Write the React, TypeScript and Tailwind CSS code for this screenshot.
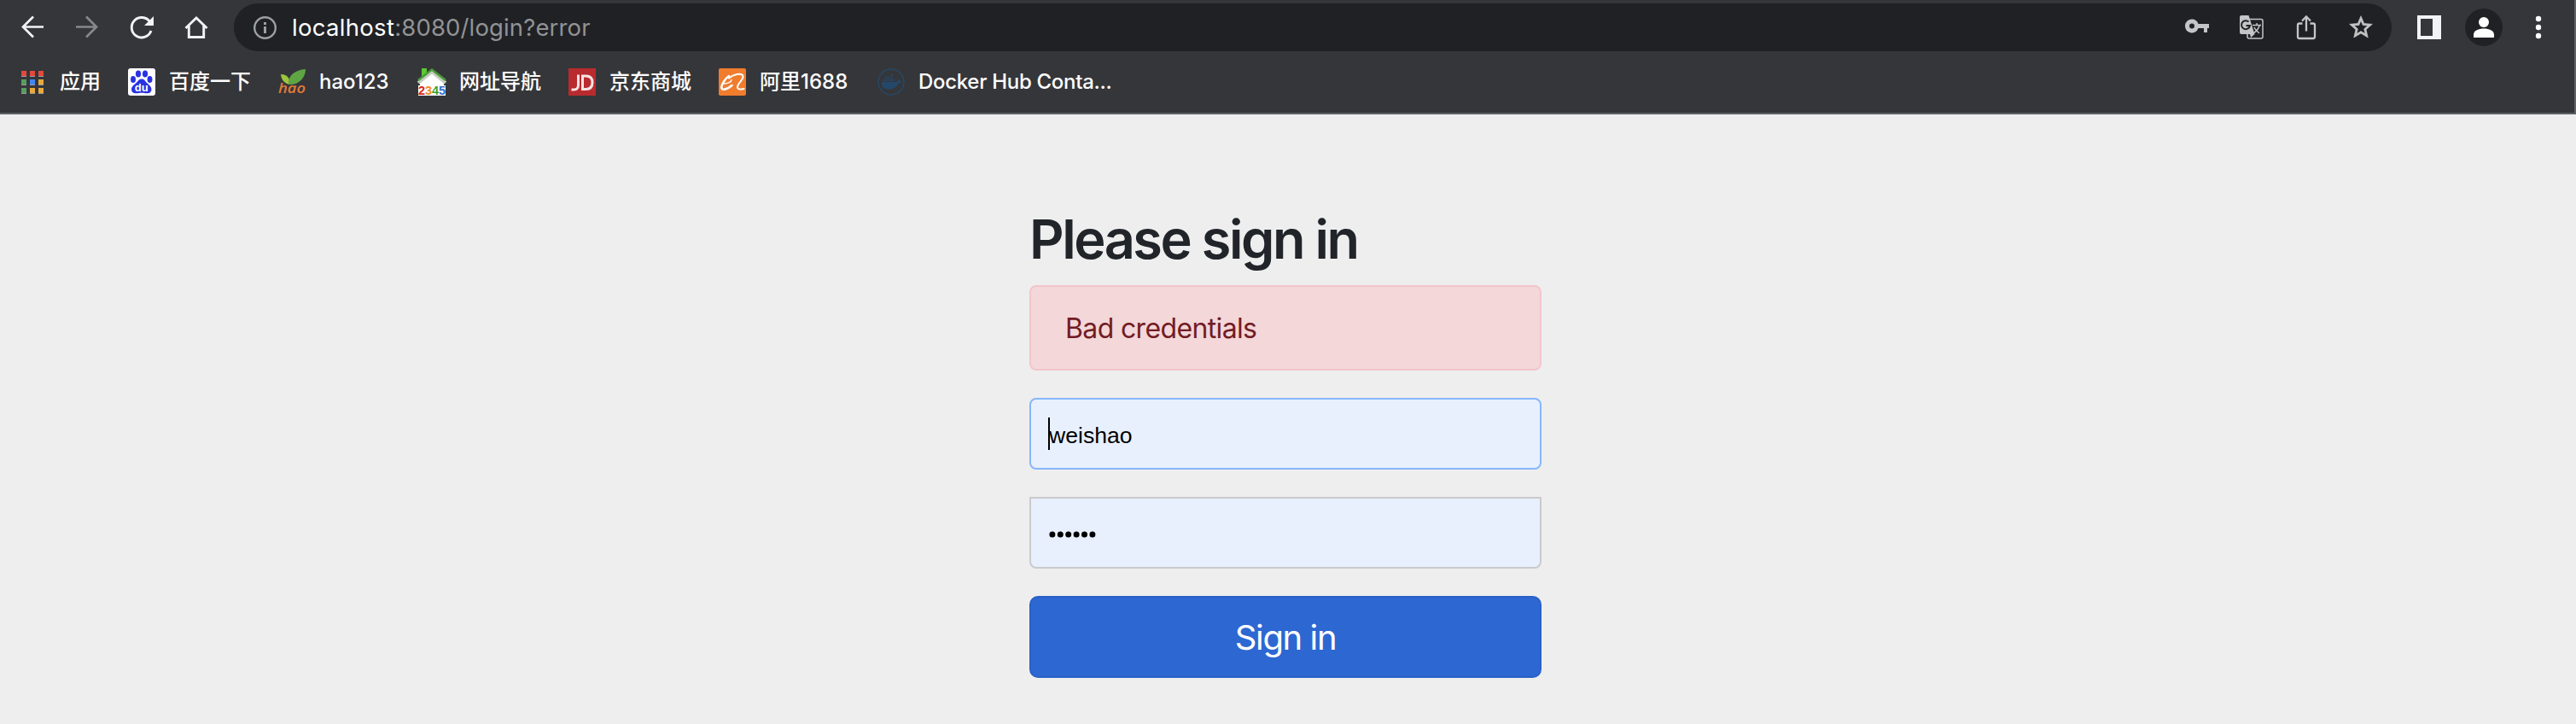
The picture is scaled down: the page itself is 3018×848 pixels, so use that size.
import React from "react";

const bookmarkText = "whitespace-nowrap text-white";

function AppsIcon() {
  const cells: [number, number, string][] = [
    [0, 0, "#e3493a"], [10, 0, "#e3493a"], [20, 0, "#e3493a"],
    [0, 10, "#559e60"], [10, 10, "#4285f0"], [20, 10, "#e8a83a"],
    [0, 20, "#559e60"], [10, 20, "#e8a83a"], [20, 20, "#e8a83a"],
  ];
  return (
    <svg className="size-[27px] shrink-0" viewBox="0 0 27 27" shapeRendering="crispEdges">
      {cells.map(([x, y, c]) => (
        <g key={`${x}-${y}`}>
          <rect x={x} y={y} width="6" height="7" fill="#9a9b9d" />
          <rect x={x} y={y} width="6" height="6" fill={c} />
        </g>
      ))}
    </svg>
  );
}

function BaiduIcon() {
  return (
    <svg className="size-8 shrink-0" viewBox="0 0 32 32">
      <rect width="32" height="32" rx="3" fill="#fff" />
      <g fill="#2932e1">
        <ellipse cx="12" cy="6.5" rx="3.1" ry="4" />
        <ellipse cx="20" cy="6.5" rx="3.1" ry="4" />
        <ellipse cx="6" cy="13" rx="3" ry="3.9" />
        <ellipse cx="25.5" cy="13" rx="3" ry="3.9" />
        <path d="M16 12.500c-3 0-4.200 2.200-6 4.200C7.500 19 4 21 4 24.800 4 28 6.500 29.500 9.500 29.300c2.500-.1 4-.5 6.500-.5s4 .4 6.500.5c3 .2 5-1.600 5-4.500 0-3.800-3.500-5.800-5.800-8.100-1.700-2-2.700-4.200-5.700-4.200z" />
      </g>
      <text x="15.800" y="26.500" textAnchor="middle" fontFamily="Liberation Sans" fontWeight="700" fontSize="13" fill="#fff">du</text>
    </svg>
  );
}

function HaoIcon() {
  return (
    <svg className="size-8 shrink-0 overflow-visible" viewBox="0 0 32 32">
      <path d="M3 7c7 0 11 4 10.500 12C7 18 3.500 13 3 7z" fill="#9bc53d" />
      <path d="M12 19C11 8 20 2 32 1c0 9-7 19-20 18z" fill="#5fa544" />
      <text x="0" y="29" textLength="32" lengthAdjust="spacingAndGlyphs" fontFamily="Open Sans" fontWeight="600" fontStyle="italic" fontSize="16.500" fill="#e07b35">hao</text>
    </svg>
  );
}

function House2345Icon() {
  return (
    <svg className="size-8 shrink-0 overflow-visible" viewBox="0 0 32 32">
      <path d="M2 17L16 5l14 12v3H2z" fill="#fff" />
      <rect y="20" width="32" height="12" fill="#fff" />
      <path d="M4 0h6v6l-6 5z" fill="#5cc832" />
      <path d="M0 17L16 4 32 17" fill="none" stroke="#c3cdbd" strokeWidth="4" />
      <path d="M0 14L16 1.500 32 14" fill="none" stroke="#4c9a3a" strokeWidth="2.500" />
      <g fontFamily="Liberation Sans" fontWeight="700" fontSize="14.500">
        <text x="0" y="30.500" fill="#d9281e">2</text>
        <text x="8" y="30.500" fill="#f08a24">3</text>
        <text x="16" y="30.500" fill="#3f9f2b">4</text>
        <text x="24" y="30.500" fill="#2f6fd0">5</text>
      </g>
    </svg>
  );
}

function JdIcon() {
  return (
    <svg className="size-8 shrink-0" viewBox="0 0 32 32">
      <rect width="32" height="32" fill="#b92b2e" />
      <g fill="none" stroke="#f8e4e4" strokeWidth="3">
        <path d="M11.500 7.500V20c0 4-2.500 5.500-8 5" />
        <path d="M16.500 9v15.500h4c5 0 7.500-3 7.500-8s-2.500-7.500-7.500-7.500z" />
      </g>
    </svg>
  );
}

function AliIcon() {
  return (
    <svg className="size-8 shrink-0" viewBox="0 0 32 32">
      <rect width="32" height="32" rx="2" fill="#f07c2e" />
      <g fill="none" stroke="#fff" strokeLinecap="round" strokeLinejoin="round">
        <path d="M12 9C7.500 12 2.500 20 3.500 23.500c1 2.500 7 1 12-3.500" strokeWidth="2.600" />
        <path d="M6 18c5 0 9-2 9-4.500" strokeWidth="1.500" />
        <path d="M12 11.500C17 7 27 5 28.500 9c1 4-6.500 8.500-6.500 13 0 3 4 3 7.500 2" strokeWidth="2" />
      </g>
    </svg>
  );
}

function DockerIcon() {
  return (
    <svg className="size-8 shrink-0" viewBox="0 0 32 32">
      <circle cx="16" cy="16" r="15" fill="none" stroke="#26486a" strokeWidth="1.400" />
      <path d="M5 16h17c1.500 0 2-1.500 1.500-3.500 1.500.5 2 1.300 2.200 2.300 1 0 2 .2 2.800.7-.7 1.500-2.200 2-4 2C22.500 22 19 24.500 13.500 24.500 7.500 24.500 4.500 21 5 16z" fill="#24486a" />
      <path d="M6.500 12.500h2V15h-2zM9.500 12.500h2V15h-2zM12.500 12.500h2V15h-2zM15.500 12.500h2V15h-2zM18.500 12.500h2V15h-2zM9.500 9.800h2v2h-2zM12.500 9.800h2v2h-2zM15.500 9.800h2v2h-2zM15.500 7h2v2h-2z" fill="#24486a" />
    </svg>
  );
}

function Toolbar() {
  return (
    <div className="flex h-16 items-start">
      <div className="flex h-16 w-[274px] shrink-0 items-center gap-8 pl-[22px]">
        <svg className="size-8 shrink-0" viewBox="0 0 32 32" fill="none" stroke="#f1f3f4" strokeWidth="2.700">
          <path d="M29 15.500H5M17 3.500L5 15.500l12 12" />
        </svg>
        <svg className="size-8 shrink-0" viewBox="0 0 32 32" fill="none" stroke="#86888a" strokeWidth="2.700">
          <path d="M3 15.500h24M15 3.500l12 12-12 12" />
        </svg>
        <svg className="size-8 shrink-0" viewBox="0 0 32 32">
          <path d="M25.500 9.500A11.700 11.700 0 1 0 27 20" fill="none" stroke="#f1f3f4" strokeWidth="2.900" />
          <path d="M30 3v11H19z" fill="#f1f3f4" />
        </svg>
        <svg className="size-8 shrink-0" viewBox="0 0 32 32" fill="none" stroke="#f1f3f4" strokeWidth="2.900">
          <path d="M3.500 17L16 5l12.500 12M7.300 14v13.500h17.400V14" />
        </svg>
      </div>
      <div className="mt-1 flex h-14 w-[2528px] shrink-0 items-center rounded-full bg-[#202124] pr-[20px] pl-[23px]">
        <svg className="size-7 shrink-0" viewBox="0 0 28 28">
          <circle cx="13.500" cy="14.500" r="12.300" fill="none" stroke="#9aa0a6" strokeWidth="2.400" />
          <path d="M12 8h3v3h-3zM12 13h3v8h-3z" fill="#9aa0a6" />
        </svg>
        <div className="ml-[17px] pt-px font-['Inter'] text-[27.500px] leading-none tracking-[0.14px] whitespace-nowrap text-[#919395]">
          <span className="tracking-[0.300px] text-white">localhost</span>:8080/login?error
        </div>
        <div className="ml-auto flex items-center gap-8 text-[#c4c5c6]">
          <svg className="size-8" viewBox="0 0 32 32" fill="currentColor">
            <path fillRule="evenodd" d="M10 6.500a8 8 0 1 0 7.500 10.500H24v5h4v-5h2v-5H17.500A8 8 0 0 0 10 6.500zm0 5a3 3 0 1 1 0 6 3 3 0 0 1 0-6z" />
          </svg>
          <svg className="size-8" viewBox="0 0 32 32">
            <rect x="11" y="6.500" width="18" height="22.500" rx="2" fill="none" stroke="currentColor" strokeWidth="1.500" />
            <path d="M4 2h8.500l7 22L15 28l-1-4H4a2 2 0 0 1-2-2V4a2 2 0 0 1 2-2z" fill="currentColor" />
            <path d="M12.500 9.500A5 5 0 1 0 14 14H9.500" fill="none" stroke="#202124" strokeWidth="2" />
            <path d="M17 13.500h10M22 11v2.500M25 14c-1 4-4 7-7 9M19 16c1 3 4 5 6 7" fill="none" stroke="currentColor" strokeWidth="1.400" />
          </svg>
          <svg className="size-8" viewBox="0 0 32 32" fill="none" stroke="currentColor" strokeWidth="2.300">
            <path d="M11.500 11.500H8a2 2 0 0 0-2 2V27a2 2 0 0 0 2 2h16a2 2 0 0 0 2-2V13.500a2 2 0 0 0-2-2h-3.500M16 20.500V4M11 8.500l5-5 5 5" />
          </svg>
          <svg className="size-8" viewBox="0 0 24 24" fill="currentColor" stroke="currentColor" strokeWidth="0.500">
            <path d="M22 9.240l-7.190-.62L12 2 9.190 8.630 2 9.240l5.460 4.730L5.820 21 12 17.270 18.180 21l-1.630-7.030L22 9.240zM12 15.400l-3.760 2.270 1-4.280-3.320-2.880 4.380-.38L12 6.100l1.710 4.040 4.380.38-3.320 2.880 1 4.280L12 15.400z" />
          </svg>
        </div>
      </div>
      <div className="flex h-16 items-center pl-[30px]">
        <svg className="size-7" viewBox="0 0 28 28" shapeRendering="crispEdges">
          <path fillRule="evenodd" d="M0 0h28v28H0zM4 4v20h14V4z" fill="#f1f3f4" />
        </svg>
        <svg className="ml-7 size-11" viewBox="0 0 44 44">
          <circle cx="22" cy="22" r="22" fill="#202124" />
          <circle cx="22" cy="16" r="6" fill="#fff" />
          <path d="M10 34v-3.500c0-4.500 6-7 12-7s12 2.500 12 7V34z" fill="#fff" />
        </svg>
        <svg className="ml-[38px] h-7 w-2" viewBox="0 0 8 28" fill="#fff">
          <circle cx="4" cy="4" r="3.200" />
          <circle cx="4" cy="14" r="3.200" />
          <circle cx="4" cy="24" r="3.200" />
        </svg>
      </div>
    </div>
  );
}

function Bookmark({ icon, label, className }: { icon: React.ReactNode; label: string; className: string }) {
  return (
    <div className={`flex shrink-0 items-center ${className}`}>
      {icon}
      <span className={bookmarkText}>{label}</span>
    </div>
  );
}

export default function App() {
  return (
    <div className="flex h-[848px] w-[3018px] flex-col overflow-hidden bg-[#eeeeee] font-['Inter','Noto_Sans_CJK_SC',sans-serif]">
      <header className="flex h-[134px] shrink-0 flex-col border-r-2 border-b-2 border-[#5f6064] bg-[#35363a]">
        <Toolbar />
        <nav className="flex h-16 items-center pl-[25px] text-[24px] leading-8 font-[450]">
          <Bookmark icon={<AppsIcon />} label="应用" className="w-[125px] gap-[18px]" />
          <Bookmark icon={<BaiduIcon />} label="百度一下" className="w-[176px] gap-4" />
          <Bookmark icon={<HaoIcon />} label="hao123" className="w-[164px] gap-4" />
          <Bookmark icon={<House2345Icon />} label="网址导航" className="w-[176px] gap-4" />
          <Bookmark icon={<JdIcon />} label="京东商城" className="w-[176px] gap-4" />
          <Bookmark icon={<AliIcon />} label="阿里1688" className="w-[186px] gap-4" />
          <Bookmark icon={<DockerIcon />} label="Docker Hub Conta..." className="gap-4 tracking-[-0.300px]" />
        </nav>
      </header>
      <main className="flex grow pt-[108px] pl-[1206px]">
        <form className="flex w-[600px] flex-col">
          <h2 className="h-[92px] text-[63px] leading-[76px] font-semibold tracking-[-2.450px] whitespace-nowrap text-[#212529]">Please sign in</h2>
          <div className="flex h-[100px] items-center rounded-lg border-2 border-[#f1c6cb] bg-[#f3d7d9] pt-[2px] pl-[40px] text-[32px] tracking-[-0.640px] text-[#721c24]">
            Bad credentials
          </div>
          <div className="mt-8 flex h-[84px] items-center rounded-lg border-2 border-[#86b7fb] bg-[#e8f0fe] pl-5 font-['Liberation_Sans'] text-[26.600px] text-black">
            <span className="h-[38px] w-[2px] bg-black" />
            <span className="-ml-px pt-[6px]">weishao</span>
          </div>
          <div className="mt-8 flex h-[84px] items-center rounded-b-lg border-2 border-[#c9cacc] bg-[#e8f0fe] pt-[3px] pl-[21px]">
            <svg className="h-2 w-[56px]" viewBox="0 0 56 8">
              {[0, 1, 2, 3, 4, 5].map((i) => (
                <circle key={i} cx={3.9 + i * 9.4} cy="4" r="3.5" />
              ))}
            </svg>
          </div>
          <button type="button" className="mt-8 h-24 rounded-[10px] border-2 border-[#2a61c8] bg-[#2d67d2] pt-[2px] text-[40px] tracking-[-1.400px] text-white">
            Sign in
          </button>
        </form>
      </main>
    </div>
  );
}
